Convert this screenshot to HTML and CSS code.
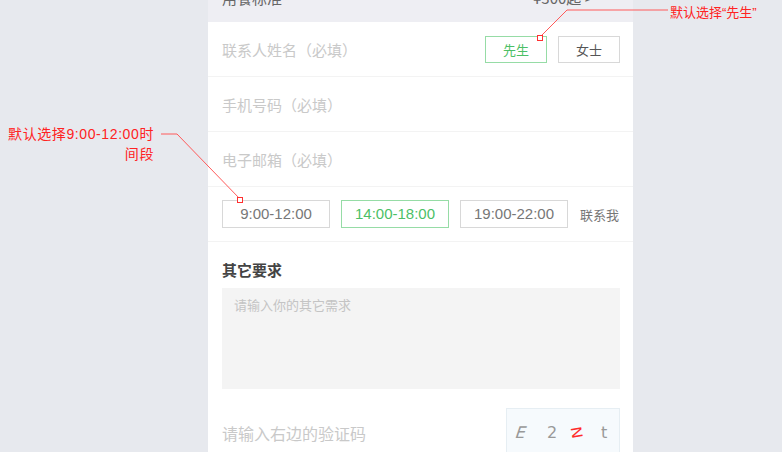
FILE: index.html
```html
<!DOCTYPE html>
<html lang="zh-CN">
<head>
  <meta charset="UTF-8">
  <title>预约表单</title>
  <link rel="stylesheet" href="styles.css">
</head>
<body>
  <div class="phone">
    <div class="top-strip">
      <span class="top-left">用餐标准</span>
      <span class="top-right">¥300起 &gt;</span>
    </div>

    <div class="row">
      <span class="label">联系人姓名（必填）</span>
      <div class="btns">
        <span class="btn sex on">先生</span>
        <span class="btn sex">女士</span>
      </div>
    </div>
    <div class="row">
      <span class="label">手机号码（必填）</span>
    </div>
    <div class="row">
      <span class="label">电子邮箱（必填）</span>
    </div>
    <div class="row times">
      <span class="btn slot">9:00-12:00</span>
      <span class="btn slot on">14:00-18:00</span>
      <span class="btn slot">19:00-22:00</span>
      <span class="contact">联系我</span>
    </div>

    <div class="other">
      <h3>其它要求</h3>
      <div class="textarea">请输入你的其它需求</div>
      <div class="captcha-row">
        <span class="label big">请输入右边的验证码</span>
        <div class="captcha">
          <span class="c1">E</span>
          <span class="c2">2</span>
          <span class="c3">N</span>
          <span class="c4">t</span>
        </div>
      </div>
    </div>
  </div>

  <!-- annotations -->
  <svg class="lines" width="782" height="452">
    <polyline points="540,37 567,10 668,10" fill="none" stroke="#ff5a5a" stroke-width="1"/>
    <rect x="537.5" y="35.5" width="5" height="5" fill="#fff" stroke="#ff3030" stroke-width="1"/>
    <polyline points="161,134 177,134 240,199" fill="none" stroke="#ff5a5a" stroke-width="1"/>
    <rect x="237.5" y="197.5" width="5" height="5" fill="#fff" stroke="#ff3030" stroke-width="1"/>
  </svg>
  <div class="note note-sex">默认选择“先生”</div>
  <div class="note note-time">默认选择9:00-12:00时<br>间段</div>
</body>
</html>
```

FILE: styles.css
```css
body {
  margin: 0;
  width: 782px;
  height: 452px;
  overflow: hidden;
  background-color: #e7e9ee;
  font-family: 'Noto Sans CJK SC', 'Liberation Sans', sans-serif;
  position: relative;
}
.phone {
  margin-left: 208px;
  width: 425px;
  height: 452px;
  background-color: #fff;
}
.top-strip {
  height: 22px;
  background-color: #eeeef3;
  display: flex;
  justify-content: space-between;
  padding: 0 40px 0 14px;
  overflow: hidden;
}
.top-strip span {
  margin-top: -12px;
  font-size: 15px;
  line-height: 20px;
  color: #666;
}
.row {
  height: 54px;
  border-bottom: 1px solid #f3f3f3;
  display: flex;
  align-items: center;
  justify-content: space-between;
  padding: 0 13px 0 14px;
}
.label {
  font-size: 15px;
  color: #c9c9c9;
}
.label.big {
  font-size: 16px;
}
.btns {
  display: flex;
  gap: 11px;
}
.btn {
  box-sizing: border-box;
  border: 1px solid #d8d8d8;
  color: #555;
  font-size: 13px;
  display: flex;
  align-items: center;
  justify-content: center;
}
.btn.on {
  border-color: #96dca6;
  color: #4cbf66;
}
.sex {
  width: 62px;
  height: 27px;
}
.times {
  justify-content: flex-start;
}
.slot {
  width: 108px;
  height: 28px;
  margin-top: -1px;
  margin-right: 11px;
  font-size: 15px;
  color: #777;
  font-family: 'Liberation Sans', sans-serif;
}
.slot.on {
  color: #4cbf66;
}
.contact {
  font-size: 13px;
  color: #777;
  margin-left: 1px;
}
.other {
  padding: 18px 13px 0 14px;
}
.other h3 {
  margin: 0;
  font-size: 15px;
  line-height: 20px;
  font-weight: bold;
  color: #444;
}
.textarea {
  margin-top: 8px;
  height: 101px;
  background-color: #f4f4f4;
  padding: 7px 12px;
  box-sizing: border-box;
  font-size: 13px;
  color: #c4c4c4;
}
.captcha-row {
  display: flex;
  justify-content: space-between;
  margin-top: 19px;
}
.captcha-row .label {
  margin-top: 13px;
}
.captcha {
  width: 114px;
  height: 50px;
  box-sizing: border-box;
  border: 1px solid #e6eef3;
  background-color: #f6fafd;
  position: relative;
  font-family: 'DejaVu Sans', sans-serif;
  color: #999;
}
.captcha span {
  position: absolute;
  top: 14px;
  font-size: 16px;
}
.c1 {
  left: 9px;
  font-style: italic;
  font-weight: 300;
  transform: skewX(-8deg);
}
.c2 {
  left: 40px;
}
.c3 {
  left: 64px;
  color: #ff2b2b;
  font-size: 16px;
  transform: rotate(-100deg) scaleY(0.9);
}
.c4 {
  left: 94px;
}
.lines {
  position: absolute;
  left: 0;
  top: 0;
}
.note {
  position: absolute;
  color: #ff2222;
  font-family: 'Liberation Sans', 'Noto Sans CJK SC', sans-serif;
  font-size: 13px;
  line-height: 20px;
}
.note-sex {
  left: 670px;
  top: 3px;
}
.note-time {
  right: 628px;
  top: 124px;
  font-size: 14px;
  letter-spacing: 0.6px;
  text-align: right;
}
```
